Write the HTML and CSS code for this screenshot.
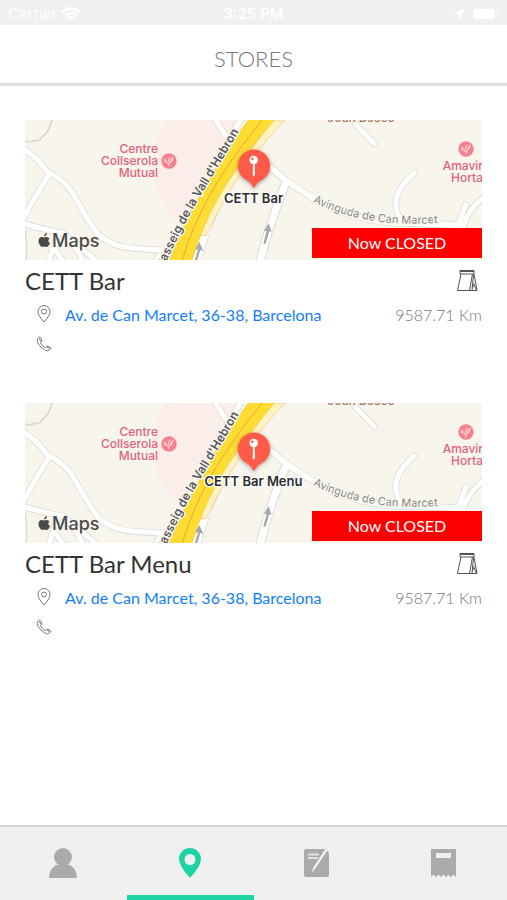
FILE: index.html
```html
<!DOCTYPE html>
<html lang="en">
<head>
<meta charset="utf-8">
<meta name="viewport" content="width=device-width, initial-scale=1">
<title>Stores</title>
<link rel="stylesheet" href="styles.css">
</head>
<body>
<svg class="defs" aria-hidden="true">
  <defs>
    <symbol id="health" viewBox="-24 -24 48 48">
      <circle r="23" fill="#f7808f"/>
      <path d="M0 15V7Q-12 6-13-6M0 7Q12 4 12-12M-3 3L2-12M-15 3L-8-2M4 2L8-8" fill="none" stroke="#fde3e6" stroke-width="3" stroke-linecap="round"/>
    </symbol>
    <symbol id="pin" viewBox="0 0 110 125">
      <path d="M55 3A50 50 0 0 1 74 99Q64 104 56 119Q54 121 52 119Q46 104 36 99A50 50 0 0 1 55 3Z" fill="#ff5b48"/>
      <circle cx="54" cy="35" r="13" fill="#fff"/>
      <circle cx="50" cy="31" r="4" fill="#ff5b48"/>
      <path d="M52 46H57L58 80L54 86L51 80Z" fill="#fff"/>
    </symbol>
    <symbol id="map" viewBox="0 0 457 140" preserveAspectRatio="xMidYMid slice">
      <rect width="457" height="140" fill="#f8f5ed"/>
      <g transform="scale(.3333) translate(-15 -9)" fill="none" stroke-linecap="round" stroke-linejoin="round">
        <path d="M440 9Q400 60 398 150Q405 240 455 295L480 300L665 9Z" fill="#fbedea"/>
        <path d="M15 72Q32 78 42 70Q58 74 67 59Q88 44 96 9" stroke="#d9d8ce" stroke-width="5"/>
        <path d="M15 335Q24 390 18 430" stroke="#dedbd5" stroke-width="4"/>
        <g stroke="#dfdcd7" stroke-width="20">
          <path d="M10 96Q50 118 83 166Q138 190 165 240Q200 305 236 355Q280 390 340 394L430 400"/>
          <path d="M85 175Q50 230 12 300"/>
          <path d="M10 319Q60 336 130 348Q160 375 230 432"/>
          <path d="M115 350L85 435M104 395L130 435M130 350Q180 400 190 440"/>
          <path d="M430 398L405 435M585 5L620 62M665 5L632 55"/>
          <path d="M745 145L795 188Q880 248 940 275Q1060 322 1160 318L1330 325" stroke-width="22"/>
          <path d="M797 198L770 270Q740 350 720 435" stroke-width="28"/>
          <path d="M1005 20L1064 80"/>
          <path d="M1183 168Q1110 230 1133 290L1140 315"/>
          <path d="M1338 262L1312 330M1395 238Q1350 270 1330 325"/>
        </g>
        <g stroke="#fff" stroke-width="15">
          <path d="M10 96Q50 118 83 166Q138 190 165 240Q200 305 236 355Q280 390 340 394L430 400"/>
          <path d="M85 175Q50 230 12 300"/>
          <path d="M10 319Q60 336 130 348Q160 375 230 432"/>
          <path d="M115 350L85 435M104 395L130 435M130 350Q180 400 190 440"/>
          <path d="M430 398L405 435M585 5L620 62M665 5L632 55"/>
          <path d="M745 145L795 188Q880 248 940 275Q1060 322 1160 318L1330 325" stroke-width="17"/>
          <path d="M797 198L770 270Q740 350 720 435" stroke-width="22"/>
          <path d="M1005 20L1064 80"/>
          <path d="M1183 168Q1110 230 1133 290L1140 315"/>
          <path d="M1338 262L1312 330M1395 238Q1350 270 1330 325"/>
        </g>
        <path d="M584 270Q555 330 524 440" stroke="#dfdcd7" stroke-width="34"/>
        <path d="M584 270Q555 330 524 440" stroke="#fff" stroke-width="29"/>
        <path d="M760 9H795Q680 130 615 246Q580 310 558 356L535 356L590 240Z" fill="#fff4bf" stroke="#f3b98c" stroke-width="2"/>
        <path d="M690 3H768Q655 135 596 240Q545 330 515 434H446Q490 320 550 220Q610 105 690 3Z" fill="#ffdc32" stroke="#f4c04a" stroke-width="2"/>
        <path d="M731 3Q635 120 573 228Q518 325 485 434" stroke="#e5a83c" stroke-width="3"/>
        <g fill="#a6a7ac">
          <path d="M538 375L550 402L541 399L531 432H524L534 397L525 398Z"/>
          <path d="M746 318L755 346L748 343L737 380H730L740 341L732 343Z"/>
        </g>
      </g>
      <path id="passeig" d="M138 149Q160 101 179 70Q198 39 219 3" fill="none"/>
      <path id="avinguda" d="M288 82Q319 97 356 102Q385 105 415 103" fill="none"/>
      <text class="street"><textPath href="#passeig">Passeig de la Vall d'Hebron</textPath></text>
      <text class="street street-minor"><textPath href="#avinguda">Avinguda de Can Marcet</textPath></text>
      <text class="place place-brown" x="336" y="2" text-anchor="middle">Joan Bosco</text>
      <g class="place" text-anchor="end">
        <text x="133" y="33">Centre</text>
        <text x="133" y="45">Collserola</text>
        <text x="133" y="57">Mutual</text>
        <text x="458" y="50">Amavir</text>
        <text x="458" y="62">Horta</text>
      </g>
      <use href="#health" x="136" y="33" width="16" height="16"/>
      <use href="#health" x="433" y="21" width="16" height="16"/>
      <use class="pin" href="#pin" x="211" y="28" width="36" height="42"/>
      <path transform="translate(13 113)" fill="#4a4a4a" d="M9 0Q9 3 6 3.500Q6 1 9 0ZM6.300 4.600Q9 3 11.500 5.400Q8.800 8 12 10Q10.500 14 8.500 14Q6.500 13 4.500 14Q2 13.500 .6 9.500Q0 5 3 4Q4.500 3.700 6.300 4.600Z"/>
      <text class="brand" x="27" y="127">Maps</text>
    </symbol>
    <symbol id="place" viewBox="0 0 14 18">
      <path d="M7 17Q1 10.500 1 6.500A6 6 0 0 1 13 6.500Q13 10.500 7 17Z"/>
      <circle cx="7" cy="6.500" r="2.500"/>
    </symbol>
    <symbol id="phone" viewBox="0 0 16 16">
      <path d="M3.500 1L1.500 2.500Q0 6 5 11Q10 16 13 14.500L15 12.500Q15 11.500 11.500 10L9.500 11.500Q8 11 6.500 9.500Q5 8 4.500 6.500L6 5Q5 1 3.500 1ZM3 2.500L5 5.500M11 11L14 13"/>
    </symbol>
    <symbol id="bag" viewBox="0 0 22 23">
      <path d="M4 1.500H18V5H4ZM5 5L1.500 21.500H21L18 5M16.500 5L13.500 21.500M17.500 6L16 21.500M17.500 14L20.500 21.500M16 19L18 16"/>
      <path d="M4 2.500H18"/>
    </symbol>
  </defs>
</svg>

<div class="status">
  <span class="carrier">Carrier
    <svg width="20" height="14" viewBox="0 0 20 14" aria-hidden="true"><path d="M1 5Q10-2 19 5M4.500 8.500Q10 4 15.500 8.500" fill="none" stroke="#fff" stroke-width="3"/><path d="M10 13.500L6.500 10.500Q10 8 13.500 10.500Z" fill="#fff"/></svg>
  </span>
  <span>3:25 PM</span>
  <span class="indicators">
    <svg width="12" height="12" viewBox="0 0 12 12" aria-hidden="true"><path d="M12 0L7 12L6 6L0 5Z" fill="#fff"/></svg>
    <svg width="28" height="12" viewBox="0 0 28 12" aria-hidden="true"><rect x="2" y="1" width="22" height="10" rx="3" fill="#fff"/><path d="M26 4V8" stroke="#fff" stroke-width="1"/></svg>
  </span>
</div>
<header class="header"><h1>STORES</h1></header>

<main class="stores">
  <article class="store">
    <div class="store-map">
      <svg class="map" role="img" aria-label="Map of CETT Bar"><use href="#map"/></svg>
      <span class="pin-label">CETT Bar</span>
      <span class="state">Now CLOSED</span>
    </div>
    <div class="title-row">
      <h2>CETT Bar</h2>
      <svg class="line-icon bag" aria-hidden="true"><use href="#bag"/></svg>
    </div>
    <div class="info-row">
      <svg class="line-icon place-icon" aria-hidden="true"><use href="#place"/></svg>
      <a href="#address">Av. de Can Marcet, 36-38, Barcelona</a>
      <span class="distance">9587.71 Km</span>
    </div>
    <div class="info-row">
      <svg class="line-icon phone-icon" aria-hidden="true"><use href="#phone"/></svg>
    </div>
  </article>

  <article class="store">
    <div class="store-map">
      <svg class="map" role="img" aria-label="Map of CETT Bar Menu"><use href="#map"/></svg>
      <span class="pin-label">CETT Bar Menu</span>
      <span class="state">Now CLOSED</span>
    </div>
    <div class="title-row">
      <h2>CETT Bar Menu</h2>
      <svg class="line-icon bag" aria-hidden="true"><use href="#bag"/></svg>
    </div>
    <div class="info-row">
      <svg class="line-icon place-icon" aria-hidden="true"><use href="#place"/></svg>
      <a href="#address">Av. de Can Marcet, 36-38, Barcelona</a>
      <span class="distance">9587.71 Km</span>
    </div>
    <div class="info-row">
      <svg class="line-icon phone-icon" aria-hidden="true"><use href="#phone"/></svg>
    </div>
  </article>
</main>

<nav class="tabs">
  <a class="tab" href="#profile" aria-label="Profile">
    <svg width="32" height="32" viewBox="0 0 32 32"><circle cx="16" cy="10" r="9"/><path d="M11 14H21L20 17Q30 20 30 31H2Q2 20 12 17Z"/></svg>
  </a>
  <a class="tab tab-active" href="#stores" aria-label="Stores" aria-current="page">
    <svg width="32" height="32" viewBox="0 0 32 32"><path fill-rule="evenodd" d="M16 31Q5 19 5 12A11 11 0 0 1 27 12Q27 19 16 31ZM16 7A5.500 5.500 0 1 0 16 18A5.500 5.500 0 1 0 16 7Z"/></svg>
  </a>
  <a class="tab" href="#orders" aria-label="Orders">
    <svg width="32" height="32" viewBox="0 0 32 32"><path d="M5 2H25L28 6V28Q28 30 26 30H5Q3 30 3 28V4Q3 2 5 2Z"/><path d="M7 7.500H18M7 11H17" stroke="#e0e0e0" stroke-width="2"/><path d="M25 1H28L14 22L11 26L12 21Z" fill="#f0f0f0"/></svg>
  </a>
  <a class="tab" href="#receipts" aria-label="Receipts">
    <svg width="32" height="32" viewBox="0 0 32 32"><path d="M3 2H28V30L25.500 27.500L23 30L20.500 27.500L18 30L15.500 27.500L13 30L10.500 27.500L8 30L5.500 27.500L3 30Z"/><path d="M8 6H23V11H8Z" fill="#f0f0f0"/></svg>
  </a>
</nav>
</body>
</html>
```
FILE: styles.css
```css
* {
  box-sizing: border-box;
}

body {
  display: flex;
  flex-direction: column;
  min-height: 100vh;
  margin: 0;
  background: #fff;
  color: #333;
  font-family: Lato, "Liberation Sans", sans-serif;
}

h1,
h2 {
  margin: 0;
}

.defs {
  position: absolute;
  width: 0;
  height: 0;
}

.status {
  display: grid;
  grid-template-columns: 1fr auto 1fr;
  align-items: center;
  height: 25px;
  padding: 2px 8px 0;
  background: #f0f0f0;
  color: #fff;
  font: 500 15px/20px Inter, sans-serif;
}

.carrier {
  display: flex;
  align-items: center;
  gap: 4px;
  font-weight: 400;
}

.indicators {
  display: flex;
  align-items: center;
  justify-content: flex-end;
  gap: 6px;
}

.header {
  height: 61px;
  padding-top: 18px;
  border-bottom: 3px solid #e0e0e0;
  text-align: center;
}

h1 {
  color: #777;
  font-size: 22px;
  font-weight: 300;
  line-height: 32px;
}

.stores {
  display: flex;
  flex: 1;
  flex-direction: column;
  gap: 44px;
  padding: 34px 25px;
}

.store-map {
  position: relative;
  height: 140px;
  overflow: hidden;
}

.map {
  display: block;
  width: 100%;
  height: 100%;
}

.street,
.place,
.brand {
  font-family: Inter, sans-serif;
}

.street {
  fill: #55565c;
  stroke: #f8f5ed;
  stroke-width: 3px;
  paint-order: stroke;
  font-size: 12px;
  font-weight: 600;
}

.street-minor {
  fill: #85858a;
  font-size: 11px;
  font-weight: 400;
}

.place {
  fill: #e0637a;
  font-size: 12px;
  font-weight: 500;
}

.place-brown {
  fill: #ab7763;
}

.brand {
  fill: #4a4a4a;
  font-size: 18px;
  font-weight: 500;
}

.pin {
  filter: drop-shadow(0 1px 2px rgb(0 0 0 / 35%));
}

.pin-label {
  position: absolute;
  top: 70px;
  left: 50%;
  transform: translateX(-50%);
  color: #2c2c30;
  font: 600 13px/16px Inter, sans-serif;
  text-shadow: 0 0 1px #fff, 1px 1px 1px #fff, -1px -1px 1px #fff, 1px -1px 1px #fff, -1px 1px 1px #fff;
  white-space: nowrap;
}

.state {
  position: absolute;
  right: 0;
  bottom: 2px;
  width: 170px;
  background: #f00;
  color: #fff;
  font-size: 16px;
  line-height: 30px;
  text-align: center;
}

.title-row {
  display: flex;
  align-items: center;
  justify-content: space-between;
  height: 39px;
  padding-top: 2px;
  padding-right: 4px;
}

h2 {
  font-size: 24px;
  font-weight: 400;
  line-height: 32px;
}

.line-icon {
  fill: none;
  stroke: #777;
  stroke-width: 1px;
}

.bag {
  width: 22px;
  height: 23px;
  stroke: #555;
}

.info-row {
  display: grid;
  grid-template-columns: 40px 1fr auto;
  align-items: center;
  height: 30px;
}

.info-row a {
  color: #147efb;
  font-size: 16px;
  text-decoration: none;
}

.distance {
  color: #777;
  font-size: 16px;
  font-weight: 300;
}

.place-icon {
  width: 14px;
  height: 18px;
  margin-left: 12px;
}

.phone-icon {
  width: 16px;
  height: 16px;
  margin-left: 11px;
}

.tabs {
  display: flex;
  height: 75px;
  border-top: 2px solid #d4d4d4;
  background: #f0f0f0;
}

.tab {
  display: flex;
  flex: 1;
  align-items: center;
  justify-content: center;
  border-top: 3px solid transparent;
  border-bottom: 5px solid transparent;
  fill: #aaa;
}

.tab-active {
  border-bottom-color: #1dd3a3;
  fill: #1dd3a3;
}
```
